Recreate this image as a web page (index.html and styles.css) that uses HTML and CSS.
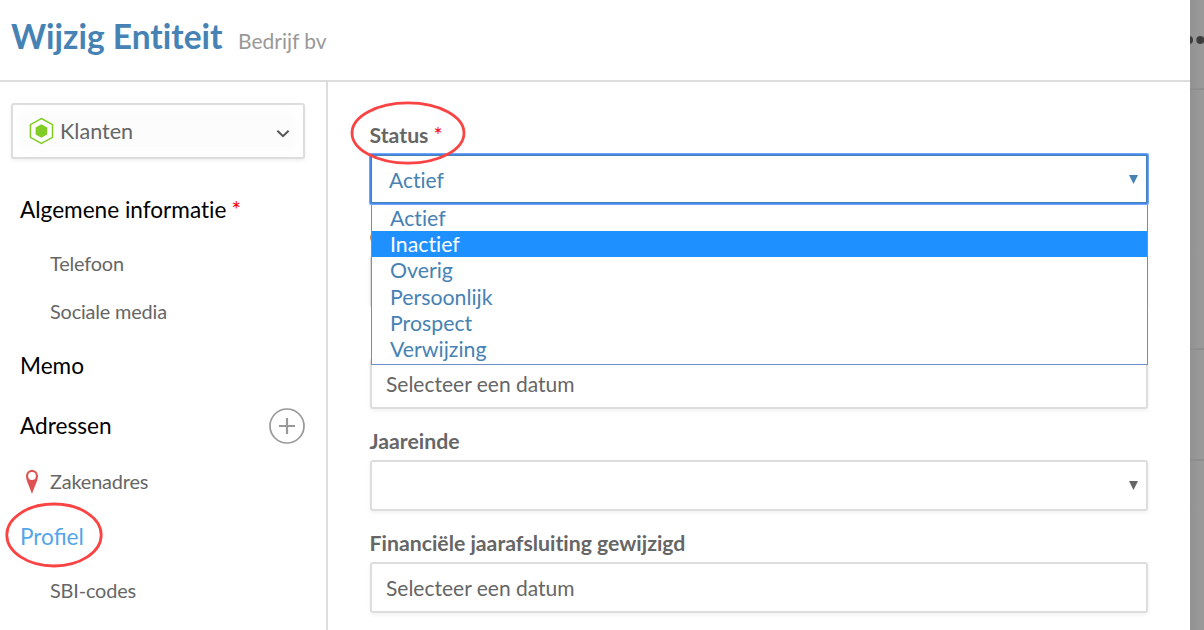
FILE: index.html
```html
<!DOCTYPE html>
<html lang="nl">
<head>
<meta charset="utf-8">
<title>Wijzig Entiteit</title>
<link rel="stylesheet" href="styles.css">
</head>
<body>
<div class="app">
  <div class="panel">
    <header class="header">
      <h1 class="title">Wijzig Entiteit</h1>
      <span class="subtitle">Bedrijf bv</span>
    </header>
    <div class="content">
      <nav class="sidebar">
        <div class="type-select">
          <svg class="hex" width="25" height="28" viewBox="0 0 25 28"><path d="M12.4 1.5 23.5 7.6V20.4L12.4 26.5 1.4 20.4V7.6Z" fill="#fff" stroke="#82cc26" stroke-width="1.5"/><path d="M12.4 7.2 18.2 10.6V17.4L12.4 20.8 6.6 17.4V10.6Z" fill="#82cc26"/></svg>
          <span class="type-name">Klanten</span>
          <svg class="chevron" width="14" height="10" viewBox="0 0 14 10"><path d="M1.4 1.8 7 7.2 12.6 1.8" fill="none" stroke="#555" stroke-width="2"/></svg>
        </div>
        <div class="menu">
          <div class="row main">Algemene informatie<span class="req">*</span></div>
          <div class="row sub">Telefoon</div>
          <div class="row sub">Sociale media</div>
          <div class="row main">Memo</div>
          <div class="row main">Adressen
            <svg class="plus" width="36" height="36" viewBox="0 0 36 36"><circle cx="18" cy="18" r="17" fill="none" stroke="#999" stroke-width="1.7"/><path d="M18 10v16M10 18h16" stroke="#999" stroke-width="2.2"/></svg>
          </div>
          <div class="row sub address">
            <svg class="pin" width="12" height="24" viewBox="0 0 12 24"><path d="M6 0C2.5 0 0 2.6 0 6.2 0 10 3.6 17 6 24 8.4 17 12 10 12 6.2 12 2.6 9.5 0 6 0Z" fill="#e05252"/><circle cx="6" cy="6" r="3.9" fill="#fff"/></svg>
            <span>Zakenadres</span>
          </div>
          <div class="row main active"><span class="marked">Profiel<svg class="ring ring-profile" viewBox="0 0 98 66"><ellipse cx="49" cy="33" rx="47.2" ry="31" /></svg></span></div>
          <div class="row sub">SBI-codes</div>
        </div>
      </nav>
      <main class="form">
        <div class="field">
          <div class="label"><span class="marked">Status<span class="req">*</span><svg class="ring ring-status" viewBox="0 0 116 64"><ellipse cx="58" cy="32" rx="56" ry="30.2" /></svg></span></div>
          <div class="input select focused"><span>Actief</span><svg class="arrow" width="9" height="9" viewBox="0 0 9 9"><path d="M0 0H9L4.5 9Z"/></svg>
            <div class="dropdown">
              <div class="option">Actief</div>
              <div class="option selected">Inactief</div>
              <div class="option">Overig</div>
              <div class="option">Persoonlijk</div>
              <div class="option">Prospect</div>
              <div class="option">Verwijzing</div>
            </div>
          </div>
        </div>
        <div class="field"><div class="label">O</div><div class="input"></div></div>
        <div class="field"><div class="label"></div><div class="input">Selecteer een datum</div></div>
        <div class="field"><div class="label">Jaareinde</div><div class="input select"><span></span><svg class="arrow" width="9" height="9" viewBox="0 0 9 9"><path d="M0 0H9L4.5 9Z"/></svg></div></div>
        <div class="field"><div class="label">Financiële jaarafsluiting gewijzigd</div><div class="input">Selecteer een datum</div></div>
      </main>
    </div>
  </div>
  <aside class="backdrop">
    <div class="strip top"><svg width="14" height="10" viewBox="0 0 14 10"><circle cx="-1" cy="5" r="4"/><circle cx="10.3" cy="5" r="4"/></svg></div>
    <div class="strip middle"></div>
    <div class="strip lower"></div>
  </aside>
</div>
</body>
</html>
```
FILE: styles.css
```css
* { box-sizing: border-box; }
body { margin: 0; font-family: Lato, sans-serif; font-variant-ligatures: none; color: #666; background: #fff; overflow: hidden; }
.app { display: flex; width: 1204px; height: 630px; overflow: hidden; }
.panel { width: 1190px; display: flex; flex-direction: column; background: #fff; }
.header { height: 82px; flex: none; border-bottom: 2px solid #ddd; display: flex; align-items: baseline; gap: 16px; padding: 15px 11px 0; }
.title { margin: 0; font-size: 33.5px; line-height: 42px; font-weight: 700; color: #4682b4; white-space: nowrap; }
.subtitle { font-size: 21px; margin-left: -.5px; color: #999; white-space: nowrap; }
.content { display: flex; flex: 1; min-height: 0; }
.sidebar { width: 328px; flex: none; border-right: 2px solid #ddd; padding: 21px 21px 0 11px; }
.type-select { height: 56px; border: 2px solid #ddd; border-radius: 3px; background: #fcfcfc; box-shadow: inset 0 0 12px 6px #fff, 0 2px 4px rgba(0,0,0,.06); display: flex; align-items: center; padding: 0 13px 0 16px; font-size: 21.6px; }
.hex { margin-top: -1px; }
.type-name { margin: 0 0 0 6px; flex: 1; line-height: 26px; }
.chevron { margin-top: 6px; }
.menu { padding-top: 21px; }
.row { display: flex; align-items: center; white-space: nowrap; line-height: 26px; }
.main { height: 60px; padding-left: 9px; font-size: 22.6px; color: #000; }
.sub { height: 48px; padding-left: 39px; padding-bottom: 2px; font-size: 19.9px; letter-spacing: -.17px; color: #666; }
.address { height: 51px; padding-left: 15px; gap: 12px; }
.pin { margin-top: 2px; }
.active { color: #55a5ea; font-variant-ligatures: normal; }
.plus { margin-left: auto; }
.req { color: #f00; margin-left: 5px; font-weight: 400; }
.marked { position: relative; }
.ring { position: absolute; fill: none; stroke: #fa4444; stroke-width: 2.8; overflow: visible; pointer-events: none; z-index: 3; }
.ring-profile { width: 98px; height: 66px; left: -15.5px; top: -22px; }
.ring-status { width: 116px; height: 64px; left: -19.5px; top: -21px; }
.form { flex: 1; padding: 21px 42px 0; }
.field { height: 102px; }
.label { height: 51px; padding-top: 19px; margin-left: -.5px; font-size: 21.25px; line-height: 26px; font-weight: 700; white-space: nowrap; }
.input { height: 51px; border: 2px solid #ddd; border-radius: 3px; background: #fff; box-shadow: 0 2px 4px rgba(0,0,0,.06); padding: 0 14px; font-size: 21px; display: flex; align-items: center; position: relative; }
.select { padding: 0 8px 0 17px; }
.arrow { margin-left: auto; fill: #666; }
.focused { color: #4682b4; border: 1px solid #4688ee; box-shadow: inset 0 0 0 1px #4682b4, 0 0 0 1px #72a5fa; height: 50px; padding: 1px 9px 0 18px; border-radius: 1px; }
.focused .arrow { fill: #4682b4; }
.dropdown { position: absolute; z-index: 2; left: 0; right: -1px; top: 50px; height: 160px; border: 1px solid #6b8fc8; border-top: 0; background: #fff; color: #4682b4; font-size: 21.3px; }
.option { height: 26.2px; line-height: 26px; padding-left: 18px; }
.selected { background: #1e90ff; color: #fff; }
.backdrop { width: 14px; background: linear-gradient(90deg, #929292, #999 10px); }
.strip { border-bottom: 2px solid #8e8e8e; }
.top { height: 90px; padding-top: 35px; }
.top svg { display: block; fill: #3d3d3d; }
.middle { height: 260px; }
.lower { height: 111px; }
```
